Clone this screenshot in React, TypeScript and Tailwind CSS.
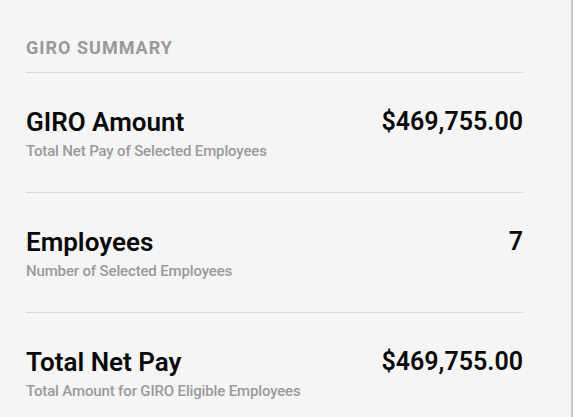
import React from "react";

const rows = [
  { title: "GIRO Amount", sub: "Total Net Pay of Selected Employees", value: "$469,755.00" },
  { title: "Employees", sub: "Number of Selected Employees", value: "7" },
  { title: "Total Net Pay", sub: "Total Amount for GIRO Eligible Employees", value: "$469,755.00" },
];

export default function App() {
  return (
    <div
      className="w-[573px] h-[417px] bg-[#f5f5f5] border-r-2 border-[#c9c9c9] overflow-hidden"
      style={{ fontFamily: "Roboto, 'Liberation Sans', sans-serif" }}
    >
      <div className="ml-[26px] w-[497px]">
        <div className="pt-[36px] pb-[12px] text-[18px] leading-[24px] font-bold tracking-[1px] text-[#999999]">
          GIRO SUMMARY
        </div>
        {rows.map((r, i) => (
          <div key={i} className="border-t border-[#d9d9d9] pt-[33px] pb-[31px]">
            <div className="flex justify-between items-start">
              <div className="text-[26px] leading-[32px] font-semibold text-[#0a0a0a]">{r.title}</div>
              <div className="text-[25px] leading-[32px] font-semibold text-[#0a0a0a]">{r.value}</div>
            </div>
            <div className="mt-[3px] text-[15px] leading-[20px] font-medium tracking-[-0.15px] text-[#9a9a9a]">{r.sub}</div>
          </div>
        ))}
      </div>
    </div>
  );
}
